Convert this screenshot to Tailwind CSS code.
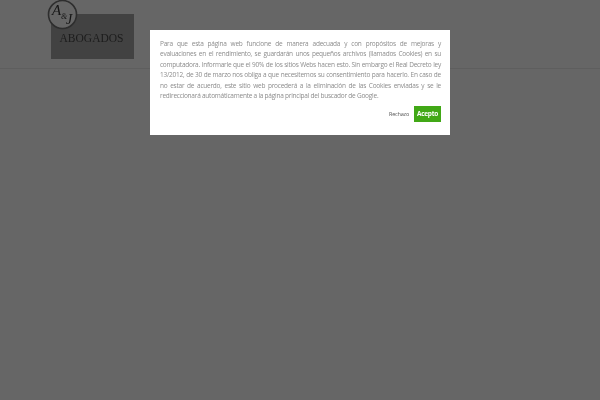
<!DOCTYPE html>
<html lang="es">
  <head>
    <meta charset="UTF-8">
    <title>Abogados</title>
    <script src="https://cdn.jsdelivr.net/npm/@tailwindcss/browser@4"></script>
  </head>
  <body class="relative w-[600px] h-[400px] overflow-hidden bg-[#666666] font-['Open_Sans',sans-serif] antialiased">
    <header class="h-[69px] border-b border-[#5e5e5e] pl-[51px] pt-[14px]">
      <div class="relative w-[83px] h-[45px] bg-[#424242] flex items-end justify-center pb-[16px] pr-[2px]">
        <span class="font-['Liberation_Serif',serif] text-[11.5px] leading-[10px] text-[#1c1c1c] blur-[0.3px]">ABOGADOS</span>
        <svg class="absolute left-[-4px] top-[-14px] blur-[0.3px]" width="31" height="30" viewBox="0 0 31 30">
          <circle cx="15.5" cy="14.5" r="14" fill="#666666" stroke="#2e2e2e" stroke-width="1.6"/>
          <g fill="#161616" font-family="Liberation Serif" font-style="italic">
            <text x="5" y="15" font-size="15">A</text>
            <text x="14" y="19" font-size="8">&amp;</text>
            <text x="19" y="24" font-size="14">J</text>
          </g>
        </svg>
      </div>
    </header>
    <div class="absolute left-[150px] top-[30px] w-[300px] h-[105px] bg-white pl-[10px] pr-[9px] pt-[9px] text-[#8c8c8c] text-[6.5px] tracking-[-0.24px] leading-[10.4px] blur-[0.25px]">
      <p class="text-justify [text-align-last:justify]">Para que esta página web funcione de manera adecuada y con propósitos de mejoras y<br>evaluaciones en el rendimiento, se guardarán unos pequeños archivos (llamados Cookies) en su<br>computadora. Informarle que el 90% de los sitios Webs hacen esto. Sin embargo el Real Decreto ley<br>13/2012, de 30 de marzo nos obliga a que necesitemos su consentimiento para hacerlo. En caso de<br>no estar de acuerdo, este sitio web procederá a la eliminación de las Cookies enviadas y se le</p>
      <p>redireccionará automáticamente a la página principal del buscador de Google.</p>
      <div class="flex items-center justify-end gap-[5px] mt-[5px]">
        <span class="text-[5.5px] tracking-[-0.2px] text-[#555555]">Rechazo</span>
        <span class="w-[27px] h-[16px] bg-[#41a816] text-white text-[6.5px] font-bold flex items-center justify-center">Acepto</span>
      </div>
    </div>
  </body>
</html>
